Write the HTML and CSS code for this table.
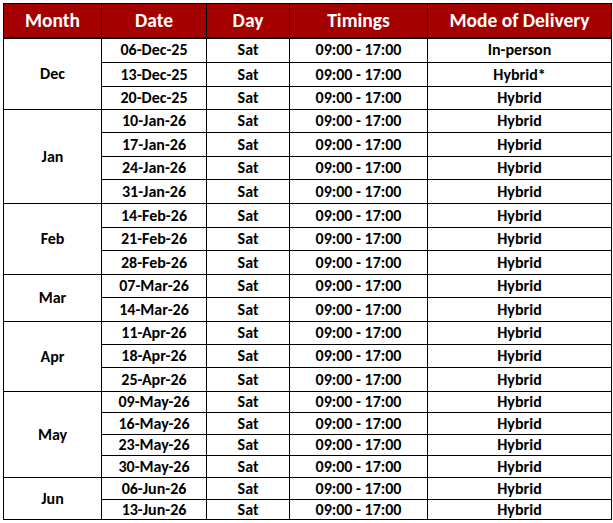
FILE: index.html
```html
<!DOCTYPE html>
<html>
<head>
<meta charset="utf-8">
<link rel="stylesheet" href="styles.css">
</head>
<body>
<table class="sched">
  <colgroup>
    <col class="c-month"><col class="c-date"><col class="c-day"><col class="c-time"><col class="c-mode">
  </colgroup>
  <thead>
    <tr class="head"><th>Month</th><th>Date</th><th>Day</th><th>Timings</th><th>Mode of Delivery</th></tr>
  </thead>
  <tbody>
    <tr class="h25"><td rowspan="3">Dec</td><td>06-Dec-25</td><td>Sat</td><td>09:00 - 17:00</td><td>In-person</td></tr>
    <tr class="h24"><td>13-Dec-25</td><td>Sat</td><td>09:00 - 17:00</td><td>Hybrid*</td></tr>
    <tr class="h23"><td>20-Dec-25</td><td>Sat</td><td>09:00 - 17:00</td><td>Hybrid</td></tr>
    <tr class="h23"><td rowspan="4">Jan</td><td>10-Jan-26</td><td>Sat</td><td>09:00 - 17:00</td><td>Hybrid</td></tr>
    <tr class="h24"><td>17-Jan-26</td><td>Sat</td><td>09:00 - 17:00</td><td>Hybrid</td></tr>
    <tr class="h23"><td>24-Jan-26</td><td>Sat</td><td>09:00 - 17:00</td><td>Hybrid</td></tr>
    <tr class="h24"><td>31-Jan-26</td><td>Sat</td><td>09:00 - 17:00</td><td>Hybrid</td></tr>
    <tr class="h24"><td rowspan="3">Feb</td><td>14-Feb-26</td><td>Sat</td><td>09:00 - 17:00</td><td>Hybrid</td></tr>
    <tr class="h23"><td>21-Feb-26</td><td>Sat</td><td>09:00 - 17:00</td><td>Hybrid</td></tr>
    <tr class="h24"><td>28-Feb-26</td><td>Sat</td><td>09:00 - 17:00</td><td>Hybrid</td></tr>
    <tr class="h23"><td rowspan="2">Mar</td><td>07-Mar-26</td><td>Sat</td><td>09:00 - 17:00</td><td>Hybrid</td></tr>
    <tr class="h24"><td>14-Mar-26</td><td>Sat</td><td>09:00 - 17:00</td><td>Hybrid</td></tr>
    <tr class="h23"><td rowspan="3">Apr</td><td>11-Apr-26</td><td>Sat</td><td>09:00 - 17:00</td><td>Hybrid</td></tr>
    <tr class="h23"><td>18-Apr-26</td><td>Sat</td><td>09:00 - 17:00</td><td>Hybrid</td></tr>
    <tr class="h24"><td>25-Apr-26</td><td>Sat</td><td>09:00 - 17:00</td><td>Hybrid</td></tr>
    <tr class="h21"><td rowspan="4">May</td><td>09-May-26</td><td>Sat</td><td>09:00 - 17:00</td><td>Hybrid</td></tr>
    <tr class="h22"><td>16-May-26</td><td>Sat</td><td>09:00 - 17:00</td><td>Hybrid</td></tr>
    <tr class="h21"><td>23-May-26</td><td>Sat</td><td>09:00 - 17:00</td><td>Hybrid</td></tr>
    <tr class="h22"><td>30-May-26</td><td>Sat</td><td>09:00 - 17:00</td><td>Hybrid</td></tr>
    <tr class="h22"><td rowspan="2">Jun</td><td>06-Jun-26</td><td>Sat</td><td>09:00 - 17:00</td><td>Hybrid</td></tr>
    <tr class="h20"><td>13-Jun-26</td><td>Sat</td><td>09:00 - 17:00</td><td>Hybrid</td></tr>
  </tbody>
</table>
</body>
</html>
```

FILE: styles.css
```css
html, body {
  margin: 0;
  padding: 0;
  background: #ffffff;
}
body {
  padding: 3px 0 0 3px;
}
.sched {
  border-collapse: collapse;
  table-layout: fixed;
  width: 608px;
  font-family: "Carlito", "Lato", "Liberation Sans", sans-serif;
  font-weight: 700;
  color: #000;
}
.c-month { width: 98px; }
.c-date { width: 105px; }
.c-day { width: 83px; }
.c-time { width: 138px; }
.c-mode { width: 184px; }
.sched th, .sched td {
  border: 1px solid #000;
  padding: 0;
  text-align: center;
  vertical-align: middle;
  line-height: 1;
}
.sched th {
  background: #a50000;
  color: #ffffff;
  font-size: 19.5px;
}
.sched td {
  font-size: 16px;
}
.head { height: 34px; }
.head th { border-bottom: 2px solid #000; }
.h20 { height: 20px; }
.h21 { height: 21px; }
.h22 { height: 22px; }
.h23 { height: 23px; }
.h24 { height: 24px; }
.h25 { height: 25px; }
```
